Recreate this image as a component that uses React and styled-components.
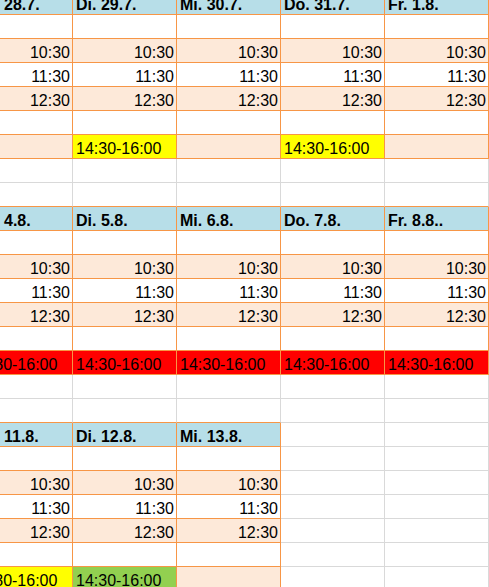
import React from "react";
import styled, { createGlobalStyle } from "styled-components";

const ORANGE = "#F79646";
const GRID = "#D9D9D9";

const fills = {
  blue: "#B7DEE8",
  peach: "#FDE9D9",
  white: "#FFFFFF",
  yellow: "#FFFF00",
  red: "#FF0000",
  green: "#92D050",
};

const GlobalStyle = createGlobalStyle`
  html, body {
    margin: 0;
    padding: 0;
    background: #fff;
    overflow: hidden;
  }
`;

const Sheet = styled.div`
  display: grid;
  grid-template-columns: repeat(5, 104px);
  grid-auto-rows: 24px;
  margin: -9px 0 0 -31px;
  font-family: "Liberation Sans", Arial, sans-serif;
  font-size: 16px;
  color: #000;
`;

const Cell = styled.div`
  box-sizing: border-box;
  height: 24px;
  padding: 4px 2px 0 3px;
  line-height: 20px;
  white-space: nowrap;
  overflow: hidden;
  background: ${(p) => fills[p.$fill] || "#fff"};
  text-align: ${(p) => (p.$right ? "right" : "left")};
  font-weight: ${(p) => (p.$bold ? 700 : 400)};
  border-right: 1px solid ${(p) => p.$edge || GRID};
  border-bottom: 1px solid ${(p) => p.$floor || GRID};
`;

const weeks = [
  {
    days: ["Mo. 28.7.", "Di. 29.7.", "Mi. 30.7.", "Do. 31.7.", "Fr. 1.8."],
    last: ["peach", "yellow", "peach", "yellow", "peach"],
  },
  {
    days: ["Mo. 4.8.", "Di. 5.8.", "Mi. 6.8.", "Do. 7.8.", "Fr. 8.8.."],
    last: ["red", "red", "red", "red", "red"],
  },
  {
    days: ["Mo. 11.8.", "Di. 12.8.", "Mi. 13.8."],
    last: ["yellow", "green", "peach"],
  },
];

const slots = [
  { fill: "blue", header: true },
  { fill: "white" },
  { fill: "peach", time: "10:30" },
  { fill: "white", time: "11:30" },
  { fill: "peach", time: "12:30" },
  { fill: "white" },
  { last: true },
];

function buildRows() {
  const rows = [];
  weeks.forEach((week, w) => {
    const n = week.days.length;
    slots.forEach((slot) => {
      const row = [];
      for (let c = 0; c < 5; c++) {
        if (c >= n) {
          row.push({ fill: "white" });
          continue;
        }
        const cell = { fill: slot.fill, edge: ORANGE, floor: ORANGE };
        if (slot.header) {
          cell.text = week.days[c];
          cell.bold = true;
        } else if (slot.time) {
          cell.text = slot.time;
          cell.right = true;
        } else if (slot.last) {
          cell.fill = week.last[c];
          if (cell.fill !== "peach") cell.text = "14:30-16:00";
        }
        row.push(cell);
      }
      rows.push(row);
    });
    if (w < weeks.length - 1) {
      const next = weeks[w + 1].days.length;
      rows.push([0, 1, 2, 3, 4].map(() => ({ fill: "white" })));
      rows.push(
        [0, 1, 2, 3, 4].map((c) => ({
          fill: "white",
          floor: c < next ? ORANGE : GRID,
        }))
      );
    }
  });
  return rows;
}

export default function App() {
  const rows = buildRows();
  return (
    <>
      <GlobalStyle />
      <Sheet>
        {rows.map((row, r) =>
          row.map((cell, c) => (
            <Cell
              key={`${r}-${c}`}
              $fill={cell.fill}
              $edge={cell.edge}
              $floor={cell.floor}
              $bold={cell.bold}
              $right={cell.right}
            >
              {cell.text}
            </Cell>
          ))
        )}
      </Sheet>
    </>
  );
}
